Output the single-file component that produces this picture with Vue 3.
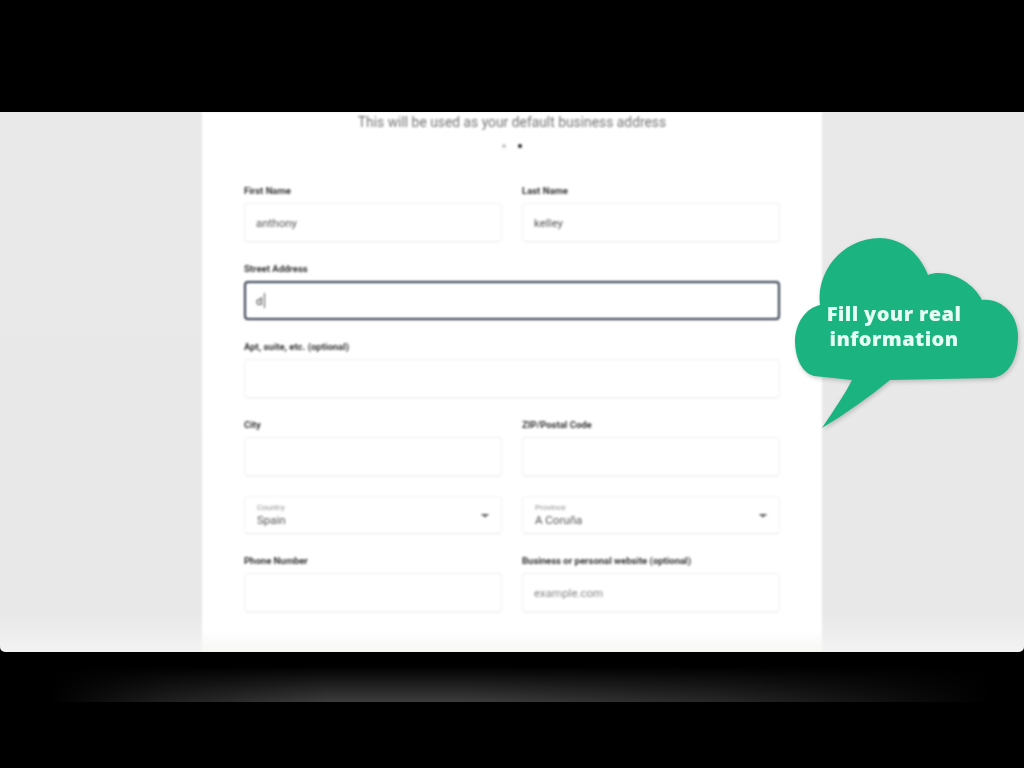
<script setup>
const fields = [
  { label: 'First Name', value: 'anthony' },
  { label: 'Last Name', value: 'kelley' },
  { label: 'Street Address', value: 'd', wide: true, focus: true },
  { label: 'Apt, suite, etc. (optional)', value: '', wide: true },
  { label: 'City', value: '' },
  { label: 'ZIP/Postal Code', value: '' },
  { small: 'Country', value: 'Spain', select: true },
  { small: 'Province', value: 'A Coruña', select: true },
  { label: 'Phone Number', value: '' },
  { label: 'Business or personal website (optional)', value: 'example.com', hint: true }
]
</script>

<template>
  <div class="frame">
    <div class="bar-top"></div>
    <div class="screen">
      <div class="panel">
        <p class="sub">This will be used as your default business address</p>
        <div class="dots"><i class="dot"></i><i class="dot on"></i></div>
        <div class="form">
          <template v-for="f in fields" :key="f.label || f.small">
            <div v-if="f.select" class="select">
              <div>
                <small>{{ f.small }}</small>
                <span>{{ f.value }}</span>
              </div>
              <svg width="10" height="5" viewBox="0 0 10 5"><path d="M0.5 1h9L5 4.5z" fill="#666" /></svg>
            </div>
            <div v-else class="field" :class="{ wide: f.wide }">
              <label>{{ f.label }}</label>
              <div class="input" :class="{ focus: f.focus, hint: f.hint }">
                {{ f.value }}<b v-if="f.focus" class="caret"></b>
              </div>
            </div>
          </template>
        </div>
      </div>

      <div class="bubble">
        <svg width="232" height="200" viewBox="790 234 232 200">
          <path
            d="M822 428 C834 410 845 394 852 380 L814 376 C800 372 795 355 795 340 C796 322 806 308 820 305 C816 272 842 238 880 238 C902 238 920 254 928 275 C945 268 972 280 982 300 C1003 298 1018 316 1018 336 C1018 360 1008 376 992 378 L890 380 C868 398 845 414 822 428 Z"
            fill="#1bb380"
          />
        </svg>
        <div class="bubble-text">Fill your real<br />information</div>
      </div>
    </div>
    <div class="bar-bottom"><div class="glow"></div></div>
  </div>
</template>

<style scoped>
.frame {
  width: 1024px;
  height: 768px;
  background: #000;
  display: flex;
  flex-direction: column;
  overflow: hidden;
  position: relative;
  font-family: Roboto, "Liberation Sans", sans-serif;
}
.bar-top {
  height: 112px;
  flex: none;
}
.screen {
  height: 540px;
  flex: none;
  background: linear-gradient(to bottom, #e9e9e9 0, #e8e8e8 93%, #f3f3f3 100%);
  border-radius: 0 0 5px 5px;
  display: flex;
  justify-content: center;
  overflow: hidden;
}
.panel {
  width: 620px;
  background: linear-gradient(to bottom, #fff 96%, #f7f7f4 100%);
  padding: 0 42px;
  box-sizing: border-box;
  filter: blur(0.9px);
}
.sub {
  margin: 0;
  height: 20px;
  line-height: 20px;
  text-align: center;
  font-size: 13.85px;
  color: #757575;
}
.dots {
  display: flex;
  justify-content: center;
  gap: 12px;
  margin-top: 11px;
  height: 6px;
  align-items: center;
}
.dot {
  width: 4px;
  height: 4px;
  border-radius: 50%;
  background: #c4c4c4;
}
.dot.on {
  background: #222;
}
.form {
  margin-top: 35px;
  display: grid;
  grid-template-columns: 258px 258px;
  column-gap: 20px;
  row-gap: 20px;
}
.field.wide {
  grid-column: span 2;
}
label {
  display: block;
  height: 14px;
  line-height: 14px;
  margin-bottom: 5px;
  font-size: 9.5px;
  font-weight: 700;
  color: #333;
}
.input {
  height: 39px;
  box-sizing: border-box;
  border: 1px solid #f0f0f0;
  border-radius: 4px;
  box-shadow: 0 1px 1px rgba(0, 0, 0, 0.04);
  padding: 0 11px;
  display: flex;
  align-items: center;
  font-size: 11.5px;
  color: #555;
}
.input.hint {
  color: #888;
}
.input.focus {
  border: 2px solid #323c4d;
  padding: 0 10px;
  color: #333;
}
.caret {
  width: 1px;
  height: 15px;
  background: #555;
  margin-left: 1px;
}
.select {
  height: 38px;
  box-sizing: border-box;
  border: 1px solid #f3f3f3;
  border-bottom-color: #e6e6e6;
  border-radius: 4px;
  padding: 0 11px 0 12px;
  display: flex;
  align-items: center;
  justify-content: space-between;
  color: #555;
}
.select small {
  display: block;
  font-size: 8px;
  line-height: 10px;
  color: #909090;
}
.select span {
  display: block;
  font-size: 11.5px;
  line-height: 14px;
}
.bubble {
  position: absolute;
  left: 790px;
  top: 234px;
  width: 232px;
  height: 200px;
}
.bubble svg {
  display: block;
  filter: drop-shadow(1px 2px 2px rgba(0, 0, 0, 0.2));
}
.bubble-text {
  position: absolute;
  left: 0;
  top: 67px;
  width: 208px;
  text-align: center;
  font-family: "Open Sans", sans-serif;
  font-weight: 800;
  font-size: 20px;
  line-height: 25px;
  letter-spacing: 0.4px;
  color: #e6fff4;
  filter: blur(0.6px);
}
.bar-bottom {
  flex: 1;
}
.glow {
  margin-top: 8px;
  height: 42px;
  background:
    linear-gradient(to right, #000 5%, rgba(0, 0, 0, 0.5) 16%, transparent 32%, transparent 45%, rgba(0, 0, 0, 0.35) 70%, #000 97%),
    linear-gradient(to bottom, #000 15%, #3c3c3c 100%);
}
</style>

<style>
body {
  background: #000;
}
</style>
